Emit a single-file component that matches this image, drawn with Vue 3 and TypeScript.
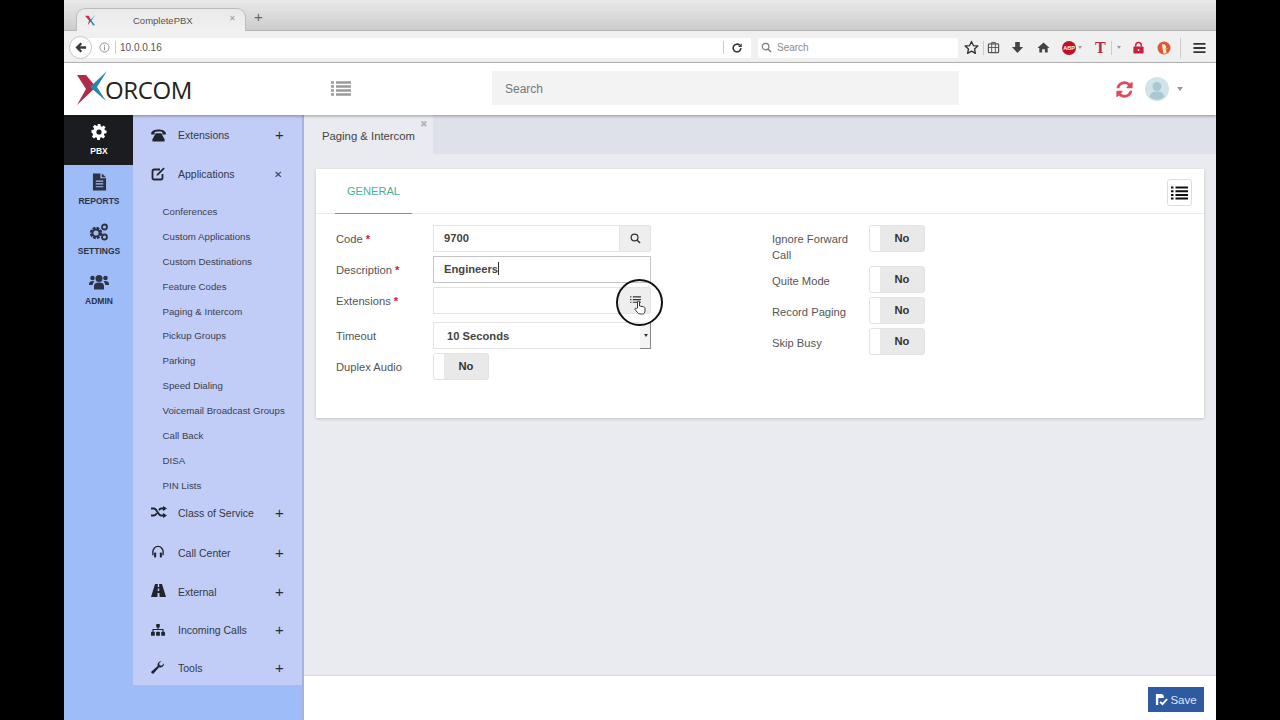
<script setup lang="ts">
interface Field { label: string; req?: boolean }
const rail = [
  { id: 'pbx', label: 'PBX', active: true },
  { id: 'reports', label: 'REPORTS', active: false },
  { id: 'settings', label: 'SETTINGS', active: false },
  { id: 'admin', label: 'ADMIN', active: false }
]
const subItems = ['Conferences', 'Custom Applications', 'Custom Destinations', 'Feature Codes', 'Paging & Intercom', 'Pickup Groups', 'Parking', 'Speed Dialing', 'Voicemail Broadcast Groups', 'Call Back', 'DISA', 'PIN Lists']
const lowerMenu = [
  { id: 'shuffle', label: 'Class of Service' },
  { id: 'headphones', label: 'Call Center' },
  { id: 'road', label: 'External' },
  { id: 'sitemap', label: 'Incoming Calls' },
  { id: 'wrench', label: 'Tools' }
]
const rightToggles: Field[] = [{ label: 'Quite Mode' }, { label: 'Record Paging' }, { label: 'Skip Busy' }]
</script>

<template>
  <div class="screen">
    <div class="browser">
      <div class="tabbar">
        <div class="btab">
          <svg class="favicon" viewBox="0 0 14 14"><path d="M1 2 L5 2 L8 7 L4 12 L5.5 7 Z" fill="#c0304f"/><path d="M12 1 L8 7 L12 12 L9.5 12 L6.5 7 Z" fill="#2f86b0"/></svg>
          <span class="btab-title">CompletePBX</span>
          <span class="btab-x">✕</span>
        </div>
        <span class="newtab">+</span>
      </div>
      <div class="toolbar">
        <div class="back">
          <svg viewBox="0 0 14 14" width="13" height="13"><path d="M7 1.5 L1.5 7 L7 12.5 L8.8 10.7 L6.4 8.4 H13 V5.6 H6.4 L8.8 3.3 Z" fill="#3a3a3a"/></svg>
        </div>
        <div class="urlbar">
          <svg class="info" viewBox="0 0 12 12" width="11" height="11"><circle cx="6" cy="6" r="5" fill="none" stroke="#8a8a8a"/><path d="M6 5v4M6 3v1.2" stroke="#8a8a8a"/></svg>
          <span class="urlsep"></span>
          <span class="url">10.0.0.16</span>
          <span class="urlsep end"></span>
          <svg class="reload" viewBox="0 0 14 14" width="12" height="12"><path d="M11.5 7a4.5 4.5 0 1 1-1.4-3.3" fill="none" stroke="#333" stroke-width="1.8"/><path d="M12.5 1.5v4.2H8.3z" fill="#333"/></svg>
        </div>
        <div class="searchbar">
          <svg viewBox="0 0 12 12" width="11" height="11"><circle cx="5" cy="5" r="3.6" fill="none" stroke="#777" stroke-width="1.3"/><path d="M7.8 7.8 11 11" stroke="#777" stroke-width="1.5"/></svg>
          <span>Search</span>
        </div>
        <div class="tools">
          <svg class="t-star" viewBox="0 0 16 16" width="15" height="15"><path d="M8 1.5l2 4.4 4.8.5-3.6 3.2 1 4.7L8 11.9l-4.2 2.4 1-4.7L1.2 6.4 6 5.9z" fill="none" stroke="#333" stroke-width="1.4" stroke-linejoin="round"/></svg>
          <span class="t-sep"></span>
          <svg class="t-clip" viewBox="0 0 14 14" width="13" height="13"><rect x="1.5" y="3" width="11" height="9.5" rx="1" fill="none" stroke="#555" stroke-width="1.3"/><path d="M5 3V1.5h4V3M1.5 7h11M5 3v9.5M9 3v9.5" fill="none" stroke="#555"/></svg>
          <svg class="t-down" viewBox="0 0 14 14" width="13" height="13"><path d="M4.5 1h5v5.5H13L7 13 1 6.500h3.500z" fill="#444"/></svg>
          <svg class="t-home" viewBox="0 0 14 14" width="13" height="13"><path d="M7 1.500 13.500 7.500H11.500V12.500H8.500V9H5.500V12.500H2.500V7.500H.5z" fill="#444"/></svg>
          <span class="abp">ABP</span><span class="caret-s"></span>
          <span class="t-t">T</span><span class="t-sep small"></span><span class="caret-s tt"></span>
          <svg class="t-lock" viewBox="0 0 14 14" width="13" height="13"><path d="M4 6V4.500a3 3 0 0 1 6 0V6" fill="none" stroke="#c8203c" stroke-width="1.600"/><rect x="1.500" y="6" width="11" height="7.500" rx="1" fill="#c8203c"/><circle cx="7" cy="9.700" r="1" fill="#fff"/></svg>
          <svg class="t-duck" viewBox="0 0 14 14" width="14" height="14"><circle cx="7" cy="7" r="6.500" fill="#de5833"/><path d="M5 3.500c3-1 4.500 1 4 4l.5 5h-3L5.500 7z" fill="#f6e8d8"/><path d="M8 7h3L8.500 9z" fill="#e8b83a"/></svg>
          <span class="t-sep wide"></span>
          <svg class="t-burger" viewBox="0 0 14 12" width="13" height="12"><path d="M.5 1.500h13M.5 6h13M.5 10.500h13" stroke="#333" stroke-width="2"/></svg>
        </div>
      </div>
    </div>

    <header class="apphead">
      <div class="logo">
        <svg class="logo-x" viewBox="0 0 32 36" width="32" height="36">
          <path d="M1 4 H10 L20 16 L1 34 L10 18 Z" fill="#b22a49"/>
          <path d="M31 0 L14 16 L30 30 L21 16 Z" fill="#2a86ad"/>
        </svg>
        <span class="logo-text">ORCOM</span>
      </div>
      <svg class="head-list" viewBox="0 0 20 16" width="20" height="16"><path d="M0 1.500h3M5 1.500h15M0 5.500h3M5 5.500h15M0 9.500h3M5 9.500h15M0 13.500h3M5 13.500h15" stroke="#9a9a9a" stroke-width="2.400"/></svg>
      <div class="head-search">Search</div>
      <svg class="sync" viewBox="0 0 1792 1792" width="19" height="19"><path d="M1639 1056q0 5-1 7-64 268-268 434.500t-478 166.500q-146 0-282.500-55t-243.500-157l-129 129q-19 19-45 19t-45-19-19-45v-448q0-26 19-45t45-19h448q26 0 45 19t19 45-19 45l-137 137q71 66 161 102t187 36q134 0 250-65t186-179q11-17 53-117 8-23 30-23h192q13 0 22.500 9.500t9.500 22.500zm25-800v448q0 26-19 45t-45 19h-448q-26 0-45-19t-19-45 19-45l138-138q-148-137-349-137-134 0-250 65t-186 179q-11 17-53 117-8 23-30 23h-199q-13 0-22.500-9.500t-9.500-22.500v-7q65-268 270-434.500t480-166.500q146 0 284 55.500t245 156.500l130-129q19-19 45-19t45 19 19 45z" fill="#e0475f"/></svg>
      <div class="avatar">
        <svg viewBox="0 0 24 24" width="24" height="24"><circle cx="12" cy="12" r="12" fill="#d2e3ea"/><circle cx="12" cy="9.500" r="4.500" fill="#aac8d4"/><path d="M4.500 20c1-4.500 4-5.500 7.500-5.500s6.500 1 7.500 5.500a12 12 0 0 1-15 0z" fill="#aac8d4"/></svg>
      </div>
      <span class="avatar-caret"></span>
    </header>

    <div class="body">
      <nav class="rail">
        <div v-for="r in rail" :key="r.id" class="rail-item" :class="{ active: r.active }">
          <svg v-if="r.id === 'pbx'" viewBox="0 0 16 16" width="16" height="16"><path d="M6.600 0h2.800l.4 2.200 1.300.6 1.900-1.300 2 2-1.300 1.900.6 1.300L16 7v2.800l-2.200.4-.6 1.300 1.300 1.900-2 2-1.900-1.300-1.300.6-.4 2.200H6.100l-.4-2.200-1.300-.6-1.900 1.300-2-2 1.300-1.900-.6-1.300L0 9.300V6.500l2.200-.4.600-1.300-1.300-1.900 2-2 1.900 1.300 1.300-.6z" fill="#fff" transform="translate(0.500 0) scale(.94)"/><circle cx="8" cy="8" r="2.600" fill="#1b1c1f"/></svg>
          <svg v-else-if="r.id === 'reports'" viewBox="0 0 16 18" width="15" height="18"><path d="M1 0h8v5h6v13H1zM10.500 0 15 4h-4.500z" fill="#2d3344"/><path d="M4 8h8M4 11h8M4 14h8" stroke="#9dbcf8" stroke-width="1.200"/></svg>
          <svg v-else-if="r.id === 'settings'" viewBox="0 0 20 18" width="20" height="18"><circle cx="7" cy="10" r="4.600" fill="none" stroke="#2d3344" stroke-width="3.200" stroke-dasharray="2.600 1"/><circle cx="7" cy="10" r="3.600" fill="none" stroke="#2d3344" stroke-width="2"/><circle cx="15.500" cy="4" r="2.500" fill="none" stroke="#2d3344" stroke-width="1.800"/><circle cx="15.500" cy="14" r="2.500" fill="none" stroke="#2d3344" stroke-width="1.800"/></svg>
          <svg v-else viewBox="0 0 20 16" width="20" height="16"><circle cx="10" cy="4.500" r="3.500" fill="#2d3344"/><circle cx="3.500" cy="4" r="2.300" fill="#2d3344"/><circle cx="16.500" cy="4" r="2.300" fill="#2d3344"/><path d="M5 15.500v-3.500c0-2.500 2-3.500 5-3.500s5 1 5 3.500v3.500zM0 10c0-2 1.500-3 3.500-3 1 0 1.500.2 2 .6C4.500 8.500 3.800 9.500 3.700 11H0zM20 10c0-2-1.500-3-3.500-3-1 0-1.500.2-2 .6 1 .900 1.700 1.900 1.800 3.400H20z" fill="#2d3344"/></svg>
          <span>{{ r.label }}</span>
        </div>
      </nav>

      <aside class="panel">
        <div class="mi first">
          <svg class="mi-icon" viewBox="0 0 16 14" width="15" height="13"><path d="M0 4.500C1 1.500 4.500 .5 8 .5s7 1 8 4l-.3 1.500h-3.500V3.500c-1-.5-2.700-.7-4.200-.7s-3.200.2-4.200.7V6H.3z" fill="#22242c"/><path d="M5 4.500h6l3.500 6.500v2.500h-13V11z" fill="#22242c"/></svg>
          <span class="mi-label">Extensions</span><span class="mi-sign">+</span>
        </div>
        <div class="mi second">
          <svg class="mi-icon up" viewBox="0 0 14 14" width="14" height="14"><path d="M9 2.500H3A1.500 1.500 0 0 0 1.500 4v7A1.500 1.500 0 0 0 3 12.500h7A1.500 1.500 0 0 0 11.500 11V7" fill="none" stroke="#22242c" stroke-width="1.800"/><path d="M12.500 .5l1.200 1.200-6.500 6.500-1.800.6.600-1.800z" fill="#22242c"/></svg>
          <span class="mi-label">Applications</span><span class="mi-close">✕</span>
        </div>
        <ul class="subs">
          <li v-for="s in subItems" :key="s">{{ s }}</li>
        </ul>
        <div v-for="m in lowerMenu" :key="m.id" class="mi lower">
          <svg v-if="m.id === 'shuffle'" class="mi-icon up" viewBox="0 0 16 12" width="16" height="12"><path d="M0 2.500h3c3 0 4 7 7 7h2M0 9.500h3c1.200 0 2-1 2.800-2.200M8 4.200c.6-1 1.200-1.700 2-1.700h2" fill="none" stroke="#22242c" stroke-width="1.800"/><path d="M12 0l4 2.500-4 2.500zM12 7l4 2.500-4 2.500z" fill="#22242c"/></svg>
          <svg v-else-if="m.id === 'headphones'" class="mi-icon upper" viewBox="0 0 14 14" width="14" height="13"><path d="M1.500 11V7a5.500 5.500 0 0 1 11 0v4" fill="none" stroke="#22242c" stroke-width="1.500"/><rect x="2.800" y="8" width="2.200" height="5.500" rx=".8" fill="#22242c"/><rect x="9" y="8" width="2.200" height="5.500" rx=".8" fill="#22242c"/></svg>
          <svg v-else-if="m.id === 'road'" class="mi-icon upper" viewBox="0 0 15 13" width="15" height="13"><path d="M4 0h2.900L6.700 3h1.600L8.100 0H11l4 13H8.600l-.2-4H6.600l-.2 4H0zM6.800 4.500l-.1 2.500h1.600l-.1-2.500z" fill="#22242c"/></svg>
          <svg v-else-if="m.id === 'sitemap'" class="mi-icon" viewBox="0 0 14 12" width="14" height="12"><rect x="5.200" y="0" width="3.600" height="3.400" rx=".6" fill="#22242c"/><path d="M7 3v3M2 8V5.500h10V8" fill="none" stroke="#22242c" stroke-width="1.100"/><rect x="0" y="7.800" width="3.800" height="4" rx=".6" fill="#22242c"/><rect x="5.100" y="7.800" width="3.800" height="4" rx=".6" fill="#22242c"/><rect x="10.200" y="7.800" width="3.800" height="4" rx=".6" fill="#22242c"/></svg>
          <svg v-else class="mi-icon up" viewBox="0 0 13 13" width="13" height="13"><path d="M13 2.800a3.700 3.700 0 0 1-4.900 3.500L2.800 12.300a1.400 1.400 0 0 1-2.100-2l6-5.300A3.700 3.700 0 0 1 10.300 .2L8.200 2.300l.4 2 2 .4L12.800 2.500z" fill="#22242c"/></svg>
          <span class="mi-label">{{ m.label }}</span><span class="mi-sign">+</span>
        </div>
      </aside>

      <div class="content">
        <div class="tabstrip">
          <div class="ctab">Paging &amp; Intercom<span class="ctab-x">✖</span></div>
        </div>
        <main class="canvas">
          <section class="card">
            <div class="card-head">
              <div class="general">GENERAL</div>
              <button class="listbtn" type="button">
                <svg viewBox="0 0 17 14" width="17" height="14"><path d="M0 1.500h2.500M4.500 1.500H17M0 5.200h2.500M4.500 5.200H17M0 8.900h2.500M4.500 8.900H17M0 12.600h2.500M4.500 12.600H17" stroke="#111" stroke-width="2"/></svg>
              </button>
            </div>
            <div class="form">
              <div class="col left">
                <div class="row r-code">
                  <label>Code <b>*</b></label>
                  <div class="group">
                    <div class="input">9700</div>
                    <div class="addon"><svg viewBox="0 0 12 12" width="11" height="11"><circle cx="5" cy="5" r="3.700" fill="none" stroke="#333" stroke-width="1.400"/><path d="M7.800 7.800 11 11" stroke="#333" stroke-width="1.600"/></svg></div>
                  </div>
                </div>
                <div class="row r-desc">
                  <label>Description <b>*</b></label>
                  <div class="input focused">Engineers<i class="caret"></i></div>
                </div>
                <div class="row r-ext">
                  <label>Extensions <b>*</b></label>
                  <div class="group">
                    <div class="input"></div>
                    <div class="addon"><svg viewBox="0 0 12 10" width="11" height="9"><path d="M0 1h1.500M3 1h9M0 4h1.500M3 4h9M0 7h1.500M3 7h9" stroke="#333" stroke-width="1.200"/></svg></div>
                    <div class="spot"></div>
                    <svg class="hand" viewBox="0 0 12 15" width="12" height="15"><path d="M3.500 8V2a1 1 0 0 1 2 0v4l4 .8c1 .2 1.500.8 1.500 1.700v2.500c0 1.500-1 3-2.500 3H6c-1 0-1.800-.5-2.400-1.400L1 9.500c-.5-.8.600-1.800 1.300-1z" fill="#fff" stroke="#222" stroke-width=".9"/></svg>
                  </div>
                </div>
                <div class="row r-time">
                  <label>Timeout</label>
                  <div class="select">10 Seconds<span class="sel-box"><span class="sel-arrow"></span></span></div>
                </div>
                <div class="row r-dup">
                  <label>Duplex Audio</label>
                  <div class="toggle"><span class="knob"></span><span class="tval">No</span></div>
                </div>
              </div>
              <div class="col right">
                <div class="rrow tall">
                  <label>Ignore Forward Call</label>
                  <div class="toggle"><span class="knob"></span><span class="tval">No</span></div>
                </div>
                <div v-for="t in rightToggles" :key="t.label" class="rrow">
                  <label>{{ t.label }}</label>
                  <div class="toggle"><span class="knob"></span><span class="tval">No</span></div>
                </div>
              </div>
            </div>
          </section>
        </main>
        <footer class="foot">
          <button class="save" type="button">
            <svg viewBox="0 0 14 14" width="13" height="13"><path d="M1 1h6.500l2 2v2.500H3.500V13H1z" fill="#fff"/><path d="M5.500 9.500l2.500 2.500 5-5.500" fill="none" stroke="#fff" stroke-width="2"/></svg>
            Save
          </button>
        </footer>
      </div>
    </div>
  </div>
</template>

<style>
html, body { margin: 0; background: #000; overflow: hidden; }
</style>

<style scoped>
* { box-sizing: border-box; }
.screen { width: 1152px; height: 720px; margin-left: 64px; background: #fff; display: flex; flex-direction: column; font-family: "Liberation Sans", Arial, sans-serif; color: #444; overflow: hidden; }

.browser { height: 63px; flex: none; }
.tabbar { height: 31px; background: linear-gradient(#e9e9e9, #cdcdcd); display: flex; align-items: flex-end; padding-left: 12px; border-bottom: 1px solid #b5b5b5; }
.btab { width: 170px; height: 23px; margin-bottom: -1px; background: linear-gradient(#e9e9e9, #f1f1f1); border: 1px solid #bcbcbc; border-bottom: none; border-radius: 9px 9px 0 0; display: flex; align-items: center; padding-left: 7px; position: relative; }
.favicon { width: 13px; height: 13px; flex: none; }
.btab-title { font-size: 9.500px; color: #555; margin-left: 36px; }
.btab-x { position: absolute; right: 9px; top: 5px; font-size: 8px; color: #999; }
.newtab { font-size: 15px; line-height: 15px; color: #666; margin: 0 0 6px 8px; }
.toolbar { height: 32px; background: #f0f0f0; border-bottom: 1px solid #bdbdbd; display: flex; align-items: center; position: relative; padding: 2px 0 0 16px; }
.back { position: absolute; left: 5px; top: 5px; width: 23px; height: 23px; border-radius: 50%; background: #fff; border: 1px solid #c6c6c6; display: flex; align-items: center; justify-content: center; z-index: 1; }
.urlbar { width: 671px; height: 20px; background: #fff; display: flex; align-items: center; padding-left: 20px; }
.info { flex: none; margin-left: -1px; }
.urlsep { width: 1px; height: 13px; background: #ccc; margin-left: 5px; flex: none; }
.url { font-size: 10px; color: #555; margin-left: 4px; flex: 1; }
.urlsep.end { margin: 0; }
.reload { margin: 0 8px 0 7px; flex: none; }
.searchbar { width: 200px; height: 20px; background: #fff; border-radius: 3px; margin-left: 7px; display: flex; align-items: center; gap: 5px; padding-left: 3px; font-size: 10px; color: #8a8a8a; }
.tools { display: flex; align-items: center; margin-left: 6px; height: 20px; }
.t-sep { width: 1px; height: 14px; background: #ccc; margin: 0 3px 0 4px; }
.t-sep.small { margin: 0 3px 0 5px; }
.t-sep.wide { height: 20px; margin: 0 12px 0 9px; }
.t-down { margin-left: 11px; }
.t-home { margin-left: 13px; }
.abp { width: 14px; height: 14px; border-radius: 50%; background: #c0102a; color: #fff; font-size: 5.500px; font-weight: bold; text-align: center; line-height: 14px; margin-left: 12px; }
.caret-s { border-top: 3px solid #999; border-left: 2.500px solid transparent; border-right: 2.500px solid transparent; margin-left: 2px; }
.caret-s.tt { margin-left: 2px; }
.t-t { font-family: "Liberation Serif", serif; font-size: 16px; line-height: 16px; color: #b22a49; font-weight: bold; margin-left: 13px; }
.t-lock { margin-left: 11px; }
.t-duck { margin-left: 12px; }

.apphead { height: 52px; flex: none; background: #fff; display: flex; align-items: center; position: relative; z-index: 2; box-shadow: 0 1px 3px rgba(0,0,0,.35); padding-left: 12px; }
.logo { display: flex; align-items: center; width: 255px; }
.logo-x { flex: none; }
.logo-text { font-family: "Open Sans", sans-serif; font-size: 24px; letter-spacing: -.4px; color: #222; margin-left: -3px; }
.head-list { flex: none; }
.head-search { width: 467px; height: 34px; margin: 0 0 2px 141px; background: #f3f3f3; font-size: 12px; color: #777; line-height: 36px; padding-left: 13px; }
.sync { margin-left: 156px; flex: none; }
.avatar { width: 24px; height: 24px; margin-left: 11px; flex: none; }
.avatar-caret { border-top: 4px solid #999; border-left: 3.500px solid transparent; border-right: 3.500px solid transparent; margin-left: 8px; }

.body { flex: 1; display: flex; min-height: 0; background: #9dbcf8; }
.rail { width: 69px; flex: none; }
.rail-item { height: 50px; display: flex; flex-direction: column; align-items: center; padding: 8px 0 0 1px; gap: 5px; font-size: 8.500px; font-weight: bold; color: #2d3344; }
.rail-item svg { height: 18px; }
.rail-item.active { background: #1b1c1f; color: #fff; }

.panel { width: 169px; height: 570px; flex: none; background: #c1cdf6; padding-top: 1px; }
.mi { display: flex; align-items: center; position: relative; height: 20px; font-size: 10.500px; color: #333845; }
.mi-icon { position: absolute; left: 18px; top: 3px; }
.mi-icon.up { top: 2px; }
.mi-icon.upper { top: 1px; }
.mi-label { position: absolute; left: 45px; top: 3px; }
.mi-sign { position: absolute; left: 142px; top: -1px; font-size: 15px; line-height: 20px; color: #2a2c33; }
.mi-close { position: absolute; left: 141px; top: 4px; font-size: 10px; color: #333; }
.mi.first { margin-top: 10px; }
.mi.second { margin-top: 19px; }
.subs { list-style: none; margin: 15px 0 0; padding: 0 0 0 29.500px; font-size: 9.700px; color: #3b4150; }
.subs li { height: 24.900px; line-height: 24.900px; }
.mi.lower { height: 20px; margin-bottom: 19px; }
.subs + .mi.lower { margin-top: 5px; margin-bottom: 20px; }
.mi.lower:nth-last-child(2) { margin-bottom: 18px; }
.mi.lower:nth-last-child(3) { margin-bottom: 18px; }

.content { flex: 1; min-width: 0; display: flex; flex-direction: column; background: #e9ebf1; border-left: 2px solid #a6b3dc; }
.tabstrip { height: 39px; flex: none; background: #dfe1ea; }
.ctab { width: 129px; height: 39px; background: #e9ebf1; font-size: 11.300px; color: #444; line-height: 42px; padding-left: 18px; position: relative; }
.ctab-x { position: absolute; right: 5px; top: 4px; font-size: 9px; line-height: 11px; color: #b5b5b5; }
.canvas { flex: 1; min-height: 0; padding: 15px 12px 0; }
.card { height: 249px; background: #fff; box-shadow: 0 1px 3px rgba(0,0,0,.18); }
.card-head { height: 45px; border-bottom: 1px solid #e8eaee; position: relative; padding-left: 19px; }
.general { width: 77px; height: 45px; border-bottom: 1px solid #3fb39c; color: #3fb39c; font-size: 11.100px; text-align: center; line-height: 44px; }
.listbtn { position: absolute; right: 12px; top: 10px; width: 25px; height: 27px; padding: 0; background: #fff; border: 1px solid #ddd; border-radius: 3px; display: flex; align-items: center; justify-content: center; }
.form { display: flex; padding: 11px 0 0 20px; font-size: 11.200px; color: #555; }
.col.left { width: 436px; }
label { display: block; width: 97px; flex: none; }
label b { color: #c8203c; font-weight: bold; }
.row { display: flex; align-items: center; height: 27px; }
.r-desc, .r-ext { margin-top: 4px; }
.r-time, .r-dup { margin-top: 4px; }
.r-time { margin-top: 8px; }
.group { width: 218px; height: 27px; display: flex; position: relative; }
.input { flex: 1; height: 27px; border: 1px solid #e3e3e3; background: #fff; font-size: 11.200px; font-weight: bold; color: #444; line-height: 25px; padding-left: 10px; min-width: 0; }
.input.focused { width: 218px; flex: none; border-color: #c4c4c4; }
.caret { display: inline-block; width: 1px; height: 13px; background: #333; vertical-align: -2px; }
.addon { width: 31px; height: 27px; flex: none; background: #eee; border: 1px solid #e3e3e3; border-left: none; border-radius: 0 3px 3px 0; display: flex; align-items: center; justify-content: center; }
.spot { position: absolute; left: 183px; top: -8px; width: 47px; height: 47px; border-radius: 50%; border: 2px solid #111; z-index: 3; }
.hand { position: absolute; left: 201px; top: 13px; z-index: 3; }
.select { width: 218px; height: 27px; border: 1px solid #e3e3e3; font-weight: bold; color: #444; line-height: 26px; padding-left: 13px; position: relative; }
.sel-box { position: absolute; right: -1px; top: -1px; bottom: -1px; width: 11px; border-right: 1px solid #888; border-bottom: 1px solid #888; background: #f4f4f4; }
.sel-arrow { position: absolute; right: 2px; top: 12px; border-top: 3px solid #333; border-left: 2px solid transparent; border-right: 2px solid transparent; }
.toggle { width: 56px; height: 27px; background: #e9e9e9; border: 1px solid #e2e2e2; border-radius: 3px; display: flex; flex: none; font-weight: bold; color: #333; overflow: hidden; }
.knob { width: 10px; background: #fff; flex: none; }
.tval { flex: 1; text-align: center; line-height: 25px; }
.col.right { width: 200px; }
.rrow { display: flex; margin-top: 4px; align-items: center; height: 27px; }
.rrow.tall { margin-top: 0; height: 37px; align-items: flex-start; }
.rrow label { line-height: 16px; position: relative; top: 1px; }
.rrow.tall label { padding-top: 5px; width: 97px; padding-right: 18px; }
.foot { height: 45px; flex: none; background: #fff; border-top: 1px solid #d6d8e2; display: flex; justify-content: flex-end; align-items: flex-start; padding: 11px 12px 0 0; }
.save { width: 56px; height: 25px; background: #2d5aa0; color: #dfe7f5; border: none; padding: 0; font-family: inherit; font-size: 11.500px; display: flex; align-items: center; justify-content: center; gap: 2px; }
</style>
